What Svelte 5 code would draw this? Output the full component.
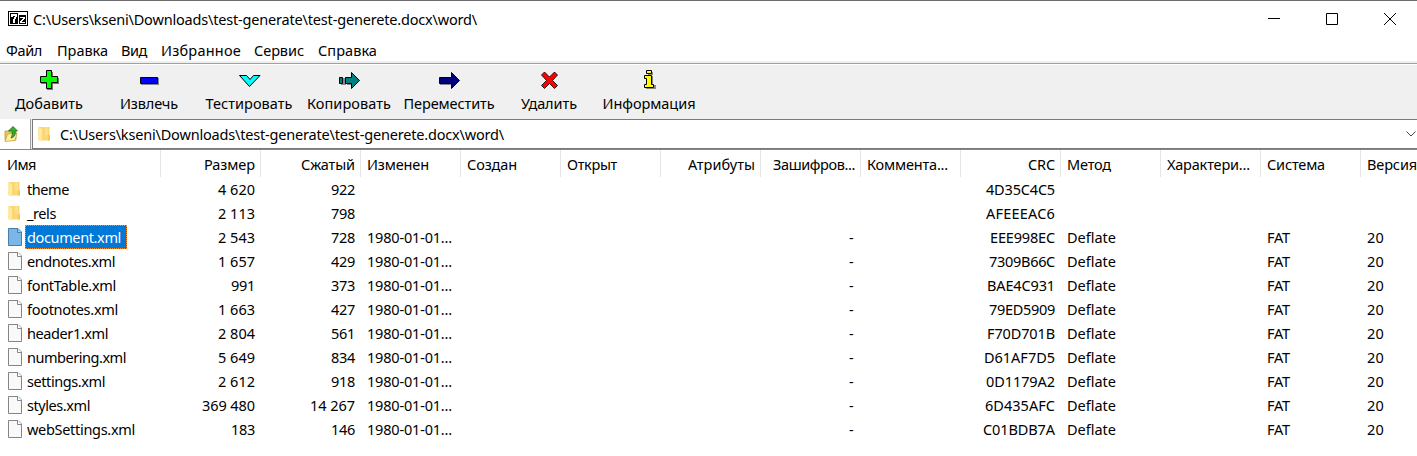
<script>
  const path = 'C:\\Users\\kseni\\Downloads\\test-generate\\test-generete.docx\\word\\';

  const menu = [
    ['Файл', 36, 51], ['Правка', 51, 64], ['Вид', 26, 40],
    ['Избранное', 80, 93], ['Сервис', 50, 64], ['Справка', 59, 70]
  ];

  const tools = [
    { id: 'add', label: 'Добавить', w: 68 },
    { id: 'extract', label: 'Извлечь', w: 58 },
    { id: 'test', label: 'Тестировать', w: 87 },
    { id: 'copy', label: 'Копировать', w: 84 },
    { id: 'move', label: 'Переместить', w: 91 },
    { id: 'delete', label: 'Удалить', w: 56 },
    { id: 'info', label: 'Информация', w: 93 }
  ];

  const columns = [
    ['Имя', 29], ['Размер', 51, true], ['Сжатый', 54, true], ['Изменен', 62],
    ['Создан', 50], ['Открыт', 50], ['Атрибуты', 67, true], ['Зашифров...', 82, true],
    ['Коммента...', 81], ['CRC', 27, true], ['Метод', 44], ['Характери...', 83],
    ['Система', 58], ['Версия', 50]
  ];

  const files = [
    { name: 'theme', w: 42, size: '4 620', sw: 37, packed: '922', pw: 24, crc: '4D35C4C5', cw: 69, dir: true },
    { name: '_rels', w: 29, size: '2 113', sw: 37, packed: '798', pw: 24, crc: 'AFEEEAC6', cw: 69, dir: true },
    { name: 'document.xml', w: 94, size: '2 543', sw: 37, packed: '728', pw: 24, crc: 'EEE998EC', cw: 65, selected: true },
    { name: 'endnotes.xml', w: 88, size: '1 657', sw: 37, packed: '429', pw: 24, crc: '7309B66C', cw: 66 },
    { name: 'fontTable.xml', w: 89, size: '991', sw: 24, packed: '373', pw: 24, crc: 'BAE4C931', cw: 68 },
    { name: 'footnotes.xml', w: 91, size: '1 663', sw: 37, packed: '427', pw: 24, crc: '79ED5909', cw: 66 },
    { name: 'header1.xml', w: 81, size: '2 804', sw: 37, packed: '561', pw: 24, crc: 'F70D701B', cw: 68 },
    { name: 'numbering.xml', w: 99, size: '5 649', sw: 37, packed: '834', pw: 24, crc: 'D61AF7D5', cw: 71 },
    { name: 'settings.xml', w: 78, size: '2 612', sw: 37, packed: '918', pw: 24, crc: '0D1179A2', cw: 69 },
    { name: 'styles.xml', w: 63, size: '369 480', sw: 53, packed: '14 267', pw: 45, crc: '6D435AFC', cw: 70 },
    { name: 'webSettings.xml', w: 108, size: '183', sw: 24, packed: '146', pw: 24, crc: 'C01BDB7A', cw: 72 }
  ];

  // Spreads the glyphs of a label evenly over the given width.
  function fit(node, width) {
    const natural = node.getBoundingClientRect().width;
    node.style.letterSpacing = `${(width - natural) / node.textContent.length}px`;
  }
</script>

{#snippet label(text, width)}<span class="label" use:fit={width}>{text}</span>{/snippet}

{#snippet folder()}
  <svg class="file-icon" width="16" height="16" viewBox="0 0 16 16">
    <path d="M1 1h10.500v13.500H1z" fill="#f9d775" />
    <path d="M7 1h3v8H7z" fill="#fbdf8c" />
    <path d="M10.500 9h1.500v5.500h-2z" fill="#f0c65b" />
    <path d="M0 1L4 3v12.500L0 14z" fill="#ffe8a0" />
  </svg>
{/snippet}

{#snippet page(selected)}
  <svg class="file-icon" width="16" height="18" viewBox="0 0 16 18">
    <path d="M.5 .5h9.500l3.500 3.500v13.500H.5z" fill={selected ? '#7bb6e8' : '#f9f9f9'} stroke={selected ? '#4b7dab' : '#858585'} />
    <path d="M9.500 .5v4h4" fill={selected ? '#9acbf0' : '#fff'} stroke={selected ? '#4b7dab' : '#858585'} />
  </svg>
{/snippet}

<main>
  <header class="titlebar">
    <svg class="logo" width="20" height="16" viewBox="0 0 20 16" shape-rendering="crispEdges">
      <path d="M0 0h20v15H0z" fill="#000" />
      <path d="M1 1h18v13H1z" fill="#fff" />
      <path d="M2 2h8v11H2zM11 4h7v9h-7z" fill="#000" />
      <path d="M3 3h6v3H8v2H7v4H5V8h1V6h1V5H5v1H3zM12 6h5v2h-1v1h-1v1h-1v1h3v1h-5v-2h1V9h1V8h1V7h-3z" fill="#fff" />
    </svg>
    {@render label(path, 444)}
    <div class="controls">
      <svg width="12" height="12" viewBox="0 0 12 12"><path d="M0 5.500h12" /></svg>
      <svg width="12" height="12" viewBox="0 0 12 12"><path d="M.5 .5h11v11H.5z" /></svg>
      <svg width="12" height="12" viewBox="0 0 12 12"><path d="M0 0l12 12M12 0L0 12" /></svg>
    </div>
  </header>

  <nav class="menu">
    {#each menu as [text, width, step]}
      <div style="width: {step}px">{@render label(text, width)}</div>
    {/each}
  </nav>

  <section class="toolbar">
    {#each tools as tool}
      <button>
        <svg width="24" height="24" viewBox="0 0 24 24" stroke-linejoin="miter">
          {#if tool.id === 'add'}
            <path d="M10 4h6v6h6v6h-6v6h-6v-6H4v-6h6z" fill="#777" />
            <path d="M9.500 2.500h5v6h6v6h-6v6h-5v-6h-6v-6h6z" fill="#0f0" stroke="#000" />
          {:else if tool.id === 'extract'}
            <path d="M4 10h18v7H4z" fill="#888" />
            <path d="M3.500 9.500h17v6h-17z" fill="#00f" stroke="#000" />
          {:else if tool.id === 'test'}
            <path d="M2.500 7.500h7l3.500 4 3.500-4h6.500L12.500 18.500z" fill="#0ff" stroke="#000" />
          {:else if tool.id === 'copy'}
            <path d="M4 10h5v7H4zM10 10h6v7h-6z" fill="#888" />
            <path d="M2.500 9.500h3v6h-3zM8.500 9.500h6v-5l8 8-8 8v-5h-6z" fill="#008080" stroke="#000" />
          {:else if tool.id === 'move'}
            <path d="M3 10h13v7H3z" fill="#888" />
            <path d="M2.500 9.500h12v-5l8 8-8 8v-5h-12z" fill="#000080" stroke="#000" />
          {:else if tool.id === 'delete'}
            <path d="M4.500 7l3-3 5 5 5-5 3 3-5 5.500 5 5-3 3-5-5-5 5-3-3 5-5z" fill="#f00" stroke="#000" stroke-width=".8" />
          {:else}
            <path d="M11 4h5v3h-5zM10 8h6v9h3v4H9v-3h3v-6h-2z" fill="#888" />
            <path d="M9.500 2.500h5v3h-5zM7.500 7.500h7v9h2v3h-9v-3h2v-6h-2z" fill="#ff0" stroke="#000" />
          {/if}
        </svg>
        {@render label(tool.label, tool.w)}
      </button>
    {/each}
  </section>

  <section class="address">
    <div class="up">
      <svg width="16" height="18" viewBox="0 0 16 18">
        <path d="M1 6h4l1 1h6v8H1z" fill="#edc85a" stroke="#b98d20" stroke-width=".7" />
        <path d="M3.500 9l9.500-1-2 7.500-10 1z" fill="#ffee9f" stroke="#c29a32" stroke-width=".7" />
        <path d="M4.500 6L9 1.500 13.500 6h-2.500c1 4-1 6-4 7 1-2 2-4 1-7z" fill="#3aad2e" stroke="#176b16" stroke-width=".8" />
      </svg>
    </div>
    <div class="combo">
      {@render folder()}
      {@render label(path, 444)}
      <svg class="chevron" width="10" height="6" viewBox="0 0 10 6"><path d="M.5 .5L5 5 9.500 .5" fill="none" stroke="#444" /></svg>
    </div>
  </section>

  <section class="table">
    <div class="row head">
      {#each columns as [text, width, right]}
        <div class="cell" class:right>{@render label(text, width)}</div>
      {/each}
    </div>
    {#each files as file}
      <div class="row file">
        <div class="cell name" class:selected={file.selected}>
          {#if file.dir}{@render folder()}{:else}{@render page(file.selected)}{/if}
          <div class="filename">{@render label(file.name, file.w)}</div>
        </div>
        <div class="cell right">{@render label(file.size, file.sw)}</div>
        <div class="cell right">{@render label(file.packed, file.pw)}</div>
        <div class="cell">{#if !file.dir}{@render label('1980-01-01...', 85)}{/if}</div>
        <div class="cell"></div>
        <div class="cell"></div>
        <div class="cell"></div>
        <div class="cell right">{#if !file.dir}{@render label('-', 6)}{/if}</div>
        <div class="cell"></div>
        <div class="cell right">{@render label(file.crc, file.cw)}</div>
        <div class="cell">{#if !file.dir}{@render label('Deflate', 49)}{/if}</div>
        <div class="cell"></div>
        <div class="cell">{#if !file.dir}{@render label('FAT', 23)}{/if}</div>
        <div class="cell">{#if !file.dir}{@render label('20', 17)}{/if}</div>
      </div>
    {/each}
  </section>
</main>

<style>
  :global(body) { margin: 0; background: #fff; overflow: hidden; }
  main {
    width: 1417px; height: 456px; overflow: hidden; box-sizing: border-box;
    border-top: 1px solid #6c6c6c; background: #fff; color: #000;
    font: 14.5px/20px "Noto Sans", sans-serif;
  }
  .label { white-space: pre; display: inline-block; flex: none; }
  .titlebar { height: 36px; display: flex; align-items: center; padding-left: 8px; gap: 5px; }
  .controls { margin-left: auto; display: flex; gap: 46px; padding-right: 21px; }
  .controls path { fill: none; stroke: #000; }
  .menu { height: 22px; display: flex; align-items: center; padding: 2px 0 0 6px; border-bottom: 2px solid #f0f0f0; }
  .toolbar {
    height: 55px; border-top: 1px solid #a0a0a0; box-shadow: inset 0 1px #fff;
    background: #f0f0f0; display: flex;
  }
  button {
    width: 100px; border: 0; padding: 4px 2px 0 0; background: none; color: inherit;
    font: inherit; display: flex; flex-direction: column; align-items: center;
  }
  button .label { margin-top: 1px; }
  .address { display: flex; height: 30px; border-bottom: 1px solid #828790; background: #f0f0f0; }
  .up {
    width: 31px; background: #fff; display: flex; align-items: center; padding-left: 4px;
    box-sizing: border-box; border-right: 1px solid #a0a0a0;
  }
  .combo {
    flex: 1; margin-left: 1px; display: flex; align-items: center; background: #fff;
    border: 1px solid #7a7a7a; border-right: 0; padding: 0 1px 0 5px;
  }
  .combo .label { margin-left: 6px; }
  .chevron { margin-left: auto; }
  .row { display: grid; grid-template-columns: 161px repeat(13, 100px); height: 24px; }
  .head { height: 27px; }
  .cell { display: flex; align-items: center; padding: 0 5px 0 6px; box-sizing: border-box; white-space: nowrap; }
  .cell:first-child { padding-left: 7px; }
  .file .name { padding-left: 8px; }
  .file .right { padding-right: 6px; }
  .head .cell { border-right: 1px solid #e5e5e5; }
  .right { justify-content: flex-end; }
  .file-icon { flex: none; display: block; }
  .filename { margin-left: 1px; padding: 1px 5px 1px 1px; border: 1px solid transparent; }
  .selected .filename { background: #0078d7; border: 1px dotted #ff8728; color: #fff; }
</style>
